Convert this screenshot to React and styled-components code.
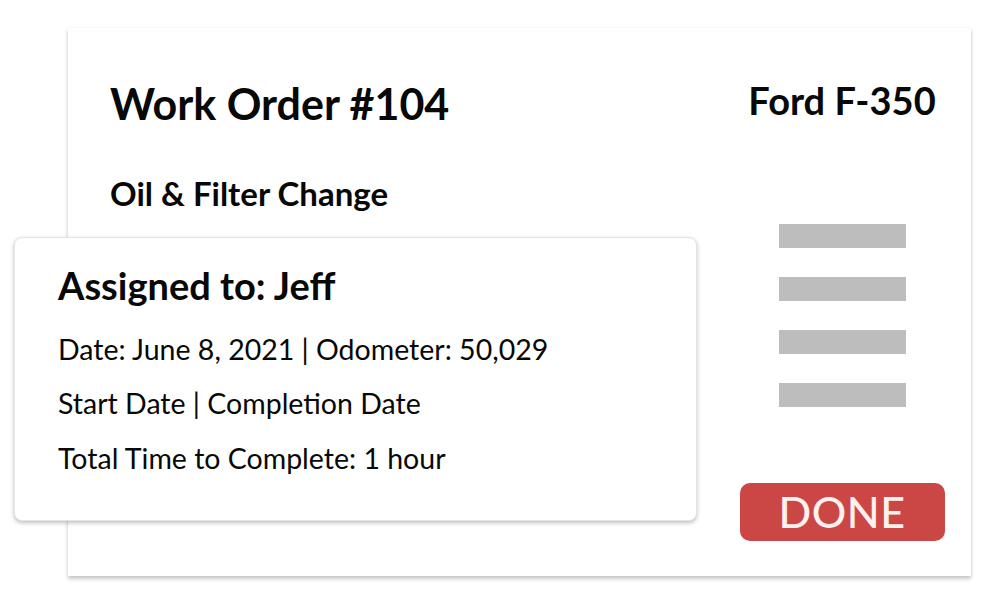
import React from "react";
import styled, { createGlobalStyle } from "styled-components";

const GlobalStyle = createGlobalStyle`
  body {
    margin: 0;
    background: #ffffff;
    font-family: Lato, "Open Sans", "Liberation Sans", sans-serif;
    color: #080808;
  }
`;

const Page = styled.div`
  width: 1000px;
  height: 601px;
  padding: 28px 0 0 68px;
  box-sizing: border-box;
  overflow: hidden;
`;

const OrderCard = styled.div`
  width: 903px;
  height: 548px;
  background: #fff;
  box-shadow: 0 3px 4px rgba(0, 0, 0, 0.22), 0 0 2px rgba(0, 0, 0, 0.06);
  display: flex;
  box-sizing: border-box;
`;

const MainColumn = styled.div`
  flex: 1;
  padding: 50px 0 0 42px;
  display: flex;
  flex-direction: column;
`;

const Title = styled.h1`
  margin: 0;
  font-size: 43px;
  font-weight: 700;
  line-height: 1.2;
`;

const Service = styled.h2`
  margin: 44px 0 0;
  font-size: 33px;
  font-weight: 700;
  line-height: 1.2;
`;

const AssignCard = styled.div`
  margin: 24px 0 0 -96px;
  width: 683px;
  height: 284px;
  box-sizing: border-box;
  background: #fff;
  border: 1px solid #e4e4e4;
  border-radius: 8px;
  box-shadow: 0 2px 4px rgba(0, 0, 0, 0.25);
  padding: 25px 0 0 43px;
  display: flex;
  flex-direction: column;
`;

const AssignTitle = styled.div`
  font-size: 38px;
  font-weight: 700;
  line-height: 1.2;
  margin-bottom: 13px;
`;

const InfoRow = styled.div`
  font-size: 28.5px;
  font-weight: 400;
  line-height: 54.5px;
  white-space: nowrap;
`;

const SideColumn = styled.div`
  width: 258px;
  padding-top: 50px;
  display: flex;
  flex-direction: column;
  align-items: center;
`;

const Vehicle = styled.div`
  font-size: 38px;
  font-weight: 700;
  line-height: 1.2;
`;

const Bars = styled.div`
  margin-top: 100px;
  display: flex;
  flex-direction: column;
  gap: 29px;
`;

const Bar = styled.div`
  width: 127px;
  height: 24px;
  background: #bdbdbd;
`;

const DoneButton = styled.button`
  margin-top: 76px;
  width: 205px;
  height: 58px;
  border: none;
  border-radius: 10px;
  background: #cb4745;
  color: #fdf0ef;
  font-family: Lato, "Open Sans", sans-serif;
  font-size: 43px;
  font-weight: 500;
  line-height: 58px;
  padding: 0;
  letter-spacing: 0.5px;
`;

const details = [
  "Date: June 8, 2021 | Odometer: 50,029",
  "Start Date | Completion Date",
  "Total Time to Complete: 1 hour",
];

export default function App() {
  return (
    <Page>
      <GlobalStyle />
      <OrderCard>
        <MainColumn>
          <Title>Work Order #104</Title>
          <Service>Oil &amp; Filter Change</Service>
          <AssignCard>
            <AssignTitle>Assigned to: Jeff</AssignTitle>
            {details.map((line) => (
              <InfoRow key={line}>{line}</InfoRow>
            ))}
          </AssignCard>
        </MainColumn>
        <SideColumn>
          <Vehicle>Ford F-350</Vehicle>
          <Bars>
            {[0, 1, 2, 3].map((i) => (
              <Bar key={i} />
            ))}
          </Bars>
          <DoneButton>DONE</DoneButton>
        </SideColumn>
      </OrderCard>
    </Page>
  );
}
